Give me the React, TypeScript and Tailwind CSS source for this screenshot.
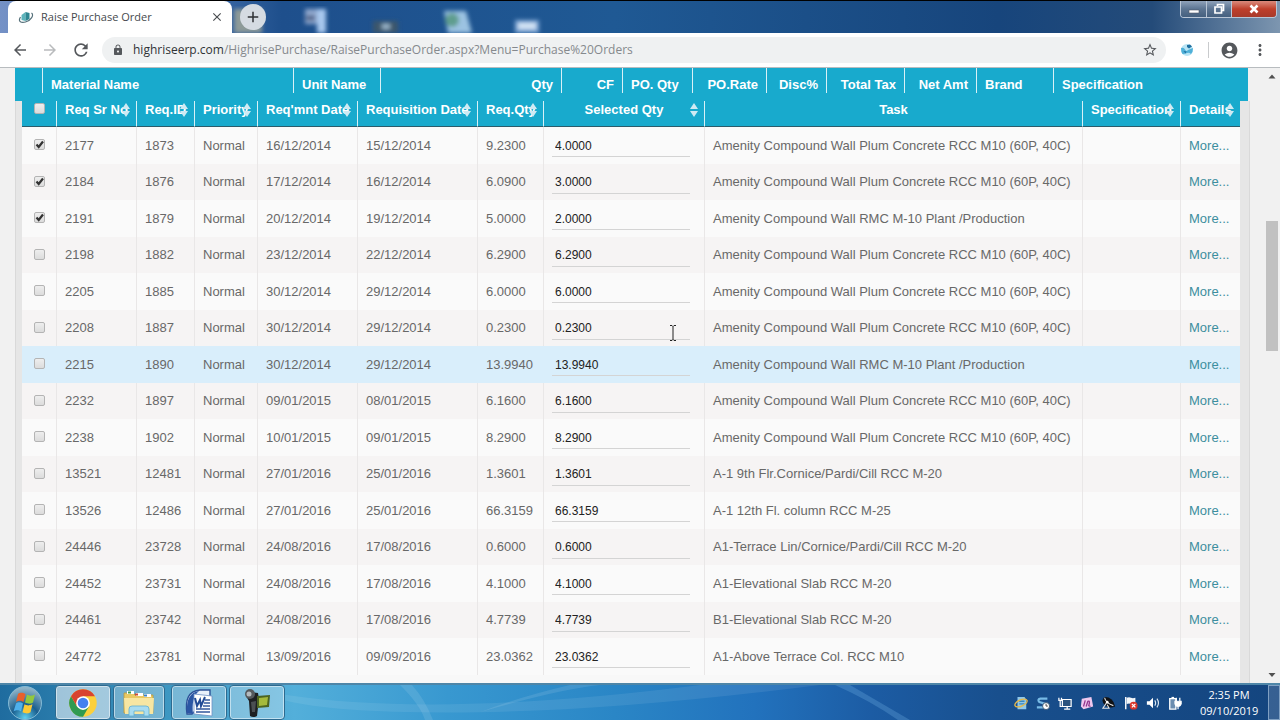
import React from 'react';
import { MdArrowBack, MdArrowForward, MdRefresh, MdLock, MdStarBorder, MdClose, MdAdd, MdMoreVert, MdAccountCircle } from 'react-icons/md';

interface RequisitionRow {
  srNo: string;
  reqId: string;
  requiredDate: string;
  requisitionDate: string;
  reqQty: string;
  selectedQty: string;
  task: string;
  checked?: boolean;
  active?: boolean;
}

const PLUM = 'Amenity Compound Wall Plum Concrete RCC M10 (60P, 40C)';
const RMC = 'Amenity Compound Wall RMC M-10 Plant /Production';

const rows: RequisitionRow[] = [
  { srNo: '2177', reqId: '1873', requiredDate: '16/12/2014', requisitionDate: '15/12/2014', reqQty: '9.2300', selectedQty: '4.0000', task: PLUM, checked: true },
  { srNo: '2184', reqId: '1876', requiredDate: '17/12/2014', requisitionDate: '16/12/2014', reqQty: '6.0900', selectedQty: '3.0000', task: PLUM, checked: true },
  { srNo: '2191', reqId: '1879', requiredDate: '20/12/2014', requisitionDate: '19/12/2014', reqQty: '5.0000', selectedQty: '2.0000', task: RMC, checked: true },
  { srNo: '2198', reqId: '1882', requiredDate: '23/12/2014', requisitionDate: '22/12/2014', reqQty: '6.2900', selectedQty: '6.2900', task: PLUM },
  { srNo: '2205', reqId: '1885', requiredDate: '30/12/2014', requisitionDate: '29/12/2014', reqQty: '6.0000', selectedQty: '6.0000', task: PLUM },
  { srNo: '2208', reqId: '1887', requiredDate: '30/12/2014', requisitionDate: '29/12/2014', reqQty: '0.2300', selectedQty: '0.2300', task: PLUM },
  { srNo: '2215', reqId: '1890', requiredDate: '30/12/2014', requisitionDate: '29/12/2014', reqQty: '13.9940', selectedQty: '13.9940', task: RMC, active: true },
  { srNo: '2232', reqId: '1897', requiredDate: '09/01/2015', requisitionDate: '08/01/2015', reqQty: '6.1600', selectedQty: '6.1600', task: PLUM },
  { srNo: '2238', reqId: '1902', requiredDate: '10/01/2015', requisitionDate: '09/01/2015', reqQty: '8.2900', selectedQty: '8.2900', task: PLUM },
  { srNo: '13521', reqId: '12481', requiredDate: '27/01/2016', requisitionDate: '25/01/2016', reqQty: '1.3601', selectedQty: '1.3601', task: 'A-1 9th Flr.Cornice/Pardi/Cill RCC M-20' },
  { srNo: '13526', reqId: '12486', requiredDate: '27/01/2016', requisitionDate: '25/01/2016', reqQty: '66.3159', selectedQty: '66.3159', task: 'A-1 12th Fl. column RCC M-25' },
  { srNo: '24446', reqId: '23728', requiredDate: '24/08/2016', requisitionDate: '17/08/2016', reqQty: '0.6000', selectedQty: '0.6000', task: 'A1-Terrace Lin/Cornice/Pardi/Cill RCC M-20' },
  { srNo: '24452', reqId: '23731', requiredDate: '24/08/2016', requisitionDate: '17/08/2016', reqQty: '4.1000', selectedQty: '4.1000', task: 'A1-Elevational Slab RCC M-20' },
  { srNo: '24461', reqId: '23742', requiredDate: '24/08/2016', requisitionDate: '17/08/2016', reqQty: '4.7739', selectedQty: '4.7739', task: 'B1-Elevational Slab RCC M-20' },
  { srNo: '24772', reqId: '23781', requiredDate: '13/09/2016', requisitionDate: '09/09/2016', reqQty: '23.0362', selectedQty: '23.0362', task: 'A1-Above Terrace Col. RCC M10' },
];

const materialColumns = [
  { label: 'Material Name', style: 'w-[251px] text-left' },
  { label: 'Unit Name', style: 'w-[87px] text-left' },
  { label: 'Qty', style: 'w-[181px] text-right' },
  { label: 'CF', style: 'w-[61px] text-right' },
  { label: 'PO. Qty', style: 'w-[70px] text-left' },
  { label: 'PO.Rate', style: 'w-[74px] text-right' },
  { label: 'Disc%', style: 'w-[60px] text-right' },
  { label: 'Total Tax', style: 'w-[78px] text-right' },
  { label: 'Net Amt', style: 'w-[72px] text-right' },
  { label: 'Brand', style: 'w-[77px] text-left' },
  { label: 'Specification', style: 'border-r-0 text-left' },
];

const requisitionColumns = [
  { label: 'Req Sr No', style: 'w-[80px] text-left', sortable: true },
  { label: 'Req.ID', style: 'w-[58px] text-left', sortable: true },
  { label: 'Priority', style: 'w-[63px] text-left', sortable: true },
  { label: "Req'mnt Date", style: 'w-[100px] text-left', sortable: true },
  { label: 'Requisition Date', style: 'w-[120px] text-left', sortable: true },
  { label: 'Req.Qty', style: 'w-[66px] text-left', sortable: true },
  { label: 'Selected Qty', style: 'w-[161px] text-center', sortable: true },
  { label: 'Task', style: 'text-center', sortable: false },
  { label: 'Specification', style: 'w-[98px] text-left', sortable: true },
  { label: 'Details', style: 'w-[59px] border-r-0 text-left', sortable: true },
];

const SiteIcon = () => (
  <svg viewBox="0 0 16 16" className="h-4 w-4 shrink-0">
    <path d="M3.500 6l4-3v9l-4-1z" fill="#5db4bb" />
    <path d="M7.500 3l4 1v6l-4 2z" fill="#2f8792" />
    <path d="M2.500 8c-3 5 1 6 5 5 5-1 9-7 6-9" fill="none" stroke="#55707a" strokeWidth="1.200" />
  </svg>
);

const GlobeIcon = () => (
  <svg viewBox="0 0 14 14" className="h-[14px] w-[14px]">
    <circle cx="7" cy="7" r="6" fill="#b9e4f4" />
    <path d="M1 5q3-1 4 1.500t3 .5l5-2q0 4-2 6-2-2-4-1T2.500 11Q1 9 1 5z" fill="#4fb0d8" />
    <path d="M7 2l3-.5 2 2-3 2-2-1.500zM3.500 8l3 .5-1 2z" fill="#1f6fa0" />
  </svg>
);

const SortIcon = () => (
  <svg viewBox="0 0 8 14" className="absolute right-[6px] top-[2px] h-[14px] w-2">
    <path d="M4 0l4 6H0zM4 14l4-6H0z" fill="#cfeaf3" />
  </svg>
);

const Checkbox: React.FC<{ label: string; checked?: boolean }> = ({ label, checked }) => (
  <span className="relative mx-auto block h-[11px] w-[11px]">
    <input
      type="checkbox"
      aria-label={label}
      defaultChecked={checked}
      className="peer block h-[11px] w-[11px] appearance-none rounded-[2px] border border-[#b4b4b4] bg-linear-to-b from-[#eeeeee] to-[#dcdcdc]"
    />
    <svg viewBox="0 0 11 11" className="pointer-events-none absolute inset-0 hidden h-[11px] w-[11px] peer-checked:block">
      <path d="M2.500 5.500l2.200 2.500L9 2.500" fill="none" stroke="#333" strokeWidth="2.200" />
    </svg>
  </span>
);

const TitleBar = () => (
  <header className="relative flex h-[33px] shrink-0 items-start justify-between border-t border-black bg-[#1f5793]">
    <svg viewBox="0 0 1280 32" preserveAspectRatio="none" className="absolute inset-0 h-full w-full">
      <defs>
        <linearGradient id="glass">
          <stop offset="0" stopColor="#7491c6" />
          <stop offset="0.170" stopColor="#3a67a4" />
          <stop offset="0.220" stopColor="#1e4f8c" />
          <stop offset="0.480" stopColor="#1f5994" />
          <stop offset="0.780" stopColor="#17457c" />
          <stop offset="0.900" stopColor="#244b79" />
          <stop offset="1" stopColor="#7d96b0" />
        </linearGradient>
        <filter id="soft"><feGaussianBlur stdDeviation="2" /></filter>
      </defs>
      <rect width="1280" height="32" fill="url(#glass)" />
      <g filter="url(#soft)">
        <rect x="234" y="8" width="28" height="24" fill="#8d9a98" />
        <rect x="305" y="8" width="12" height="15" fill="#8ea6cc" />
        <rect x="317" y="8" width="9" height="24" fill="#a9c8ee" />
        <rect x="306" y="15" width="9" height="4" fill="#3c4f78" />
        <rect x="373" y="20" width="25" height="12" fill="#3c566c" />
        <rect x="382" y="23" width="8" height="5" fill="#9ab6cc" />
        <path d="M444 10h22l6 22h-24z" fill="#9cc3e2" />
        <circle cx="452" cy="19" r="7" fill="#5f9d8e" />
        <rect x="515" y="19" width="24" height="13" fill="#7ea6d4" />
        <rect x="518" y="22" width="18" height="6" fill="#d6e6f6" />
      </g>
    </svg>
    <div className="relative flex h-8 items-center">
      <div className="ml-2 flex h-8 w-[224px] items-center rounded-t-lg bg-white pl-[10px] pr-2">
        <SiteIcon />
        <span className="ml-[7px] grow font-['Open_Sans',sans-serif] text-[11px] text-[#45494d]">Raise Purchase Order</span>
        <button aria-label="Close tab"><MdClose className="block h-[14px] w-[14px] text-[#4a4d51]" /></button>
      </div>
      <button aria-label="New tab" className="ml-2 flex h-[26px] w-[26px] items-center justify-center rounded-full bg-[#d5dbe2]">
        <MdAdd className="h-[18px] w-[18px] text-[#2e3134]" />
      </button>
    </div>
    <div className="relative mr-[3px] flex h-[17px] overflow-hidden rounded-b border border-t-0 border-[#b9c6d6]">
      <button aria-label="Minimize" className="flex w-[26px] items-center justify-center border-r border-[#b9c6d6] bg-linear-to-b from-[#8fa2ba] via-[#5c7592] to-[#45607f]">
        <svg viewBox="0 0 12 12" className="h-3 w-3"><path d="M1 7h10v3H1z" fill="#fff" stroke="#50596a" strokeWidth="0.600" /></svg>
      </button>
      <button aria-label="Restore" className="flex w-[25px] items-center justify-center border-r border-[#b9c6d6] bg-linear-to-b from-[#8fa2ba] via-[#5c7592] to-[#45607f]">
        <svg viewBox="0 0 12 12" className="h-3 w-3"><path d="M4.500 3V1.500h6v6H9M2 4h6.500v6H2z" fill="none" stroke="#fff" strokeWidth="1.700" /></svg>
      </button>
      <button aria-label="Close" className="flex w-[44px] items-center justify-center bg-linear-to-b from-[#d98a7c] via-[#bf3f2b] to-[#a83a2a]">
        <svg viewBox="0 0 12 12" className="h-3 w-3"><path d="M2.500 2.500l7 7M9.500 2.500l-7 7" stroke="#fff" strokeWidth="2.600" /></svg>
      </button>
    </div>
  </header>
);

const Toolbar = () => (
  <nav className="flex h-[35px] shrink-0 items-center border-b border-[#b8bcbf] bg-white px-[11px] text-[#55585c]">
    <button aria-label="Back"><MdArrowBack className="block h-[18px] w-[18px]" /></button>
    <button aria-label="Forward" className="ml-3"><MdArrowForward className="block h-[18px] w-[18px] text-[#b9bbbd]" /></button>
    <button aria-label="Reload" className="ml-3"><MdRefresh className="block h-5 w-5" /></button>
    <div className="ml-[11px] flex h-[26px] grow items-center rounded-full bg-[#eff1f2] pl-[10px] pr-2">
      <MdLock className="h-3 w-3 shrink-0" />
      <p className="ml-[9px] grow font-['Open_Sans',sans-serif] text-[12px] text-[#85898d]">
        <span className="text-[#303336]">highriseerp.com</span>/HighrisePurchase/RaisePurchaseOrder.aspx?Menu=Purchase%20Orders
      </p>
      <button aria-label="Bookmark this page"><MdStarBorder className="block h-4 w-4" /></button>
    </div>
    <button aria-label="Extension" className="ml-[14px]"><GlobeIcon /></button>
    <span className="ml-[14px] h-4 w-px bg-[#c9cbcd]" />
    <button aria-label="Profile" className="ml-[11px]"><MdAccountCircle className="block h-[19px] w-[19px]" /></button>
    <button aria-label="Menu" className="ml-3"><MdMoreVert className="block h-[18px] w-[18px]" /></button>
  </nav>
);

const MaterialHeader = () => (
  <div className="bg-[#18aacd] pb-2">
    <table className="w-full table-fixed border-separate border-spacing-0 text-[13px] leading-4 text-white">
      <thead>
        <tr>
          <td className="h-[25px] w-[28px] border-r border-[#d9f1f7] p-0" />
          {materialColumns.map(col => (
            <th key={col.label} className={`h-[25px] whitespace-nowrap border-r border-[#d9f1f7] px-2 pb-0 pt-[9px] font-bold ${col.style}`}>
              {col.label}
            </th>
          ))}
        </tr>
      </thead>
    </table>
  </div>
);

const cell = 'border-r border-[#e9e7e7] px-2 py-0 group-data-active:border-transparent whitespace-nowrap';

const RequisitionTable = () => (
  <table className="w-full table-fixed border-separate border-spacing-0 bg-[#fafafa] text-[13px] text-[#686868]">
    <thead>
      <tr className="bg-[#18aacd] leading-[18px] text-white">
        <th className="h-[26px] w-[35px] border-b border-r border-b-[#2b5c6b] border-r-[#d9f1f7] px-0 pb-0 pt-[2px] align-top">
          <Checkbox label="Select all requisitions" />
        </th>
        {requisitionColumns.map(col => (
          <th key={col.label} className={`relative h-[26px] whitespace-nowrap border-b border-r border-b-[#2b5c6b] border-r-[#d9f1f7] px-2 py-0 align-top font-bold ${col.style}`}>
            {col.label}
            {col.sortable && <SortIcon />}
          </th>
        ))}
      </tr>
    </thead>
    <tbody>
      {rows.map(row => (
        <tr
          key={row.srNo}
          data-active={row.active || undefined}
          className="group h-[37px] bg-[#fafafa] even:h-9 even:bg-[#f6f4f4] data-active:bg-[#d9eefb]"
        >
          <td className="border-r border-[#e9e7e7] px-0 pb-[2px] pt-0 group-data-active:border-transparent">
            <Checkbox label={`Select requisition ${row.srNo}`} checked={row.checked} />
          </td>
          <td className={cell}>{row.srNo}</td>
          <td className={cell}>{row.reqId}</td>
          <td className={cell}>Normal</td>
          <td className={cell}>{row.requiredDate}</td>
          <td className={cell}>{row.requisitionDate}</td>
          <td className={cell}>{row.reqQty}</td>
          <td className={cell}>
            <input
              type="text"
              aria-label={`Selected quantity for ${row.srNo}`}
              defaultValue={row.selectedQty}
              className="block h-[23px] w-[138px] border-b border-[#d4d4d4] bg-transparent pl-[3px] pt-px text-[12px] text-[#222] outline-none"
            />
          </td>
          <td className={cell}>{row.task}</td>
          <td className={cell} />
          <td className="px-2 py-0"><a href="#" className="text-[#3d8e9e]">More...</a></td>
        </tr>
      ))}
    </tbody>
  </table>
);

const PageScrollbar = () => (
  <div className="flex w-4 shrink-0 flex-col items-center bg-[#f1f1f1]">
    <svg viewBox="0 0 16 16" className="h-4 w-4 shrink-0"><path d="M4.500 10.500h7L8 6.500z" fill="#505050" /></svg>
    <div className="mt-[137px] h-[130px] w-3 shrink-0 bg-[#c1c1c1]" />
    <svg viewBox="0 0 16 16" className="mt-auto h-4 w-4 shrink-0"><path d="M4.500 6h7L8 10z" fill="#505050" /></svg>
  </div>
);

const StartOrb = () => (
  <svg viewBox="0 0 36 36" className="h-[36px] w-[36px]">
    <defs>
      <radialGradient id="orb" cx="0.500" cy="0.950" r="0.900">
        <stop offset="0" stopColor="#5fd0f0" />
        <stop offset="0.450" stopColor="#1b5f8f" />
        <stop offset="1" stopColor="#8fb4c8" />
      </radialGradient>
    </defs>
    <circle cx="18" cy="18" r="16.500" fill="url(#orb)" stroke="#83bad6" strokeWidth="1" />
    <path d="M11 9c3-2 5-1 7.500 0l-2 8c-2-1-4-2-7.500 0z" fill="#e8602c" />
    <path d="M20 9.500c2 1 4 2 8 0l-2 8c-3 2-5 1-8 0z" fill="#93c83e" />
    <path d="M9 18.500c3-2 5-1 7 0l-2 8c-2-1-4-2-7.500 0z" fill="#4fb0ec" />
    <path d="M17.500 19.300c2 1 4 2 8 0l-2 8c-3 2-5 1-8 0z" fill="#fcc934" />
  </svg>
);

const ChromeIcon = () => (
  <svg viewBox="0 0 48 48" className="h-[30px] w-[30px]">
    <circle cx="24" cy="24" r="22" fill="#fbd03c" />
    <path d="M24 24L4.900 13A22 22 0 0 1 43.100 13H24z" fill="#d8432f" />
    <path d="M4.900 13A22 22 0 0 0 24 46l9.500-16.500L24 24 14.500 29.500z" fill="#2f9a51" />
    <path d="M4.900 13L14.500 29.500 24 24V13z" fill="#d8432f" />
    <circle cx="24" cy="24" r="11" fill="#fff" />
    <circle cx="24" cy="24" r="8.500" fill="#4480ef" />
  </svg>
);

const ExplorerIcon = () => (
  <svg viewBox="0 0 32 28" className="h-7 w-8">
    <path d="M1 4h9l2 2h18v18H1z" fill="#e9c964" stroke="#b99a3e" strokeWidth="0.800" />
    <path d="M4 2h7v3H4zM13 4h7v3h-7zM21 5h7v3h-7z" fill="#fff" />
    <path d="M5 2.500h3v2H5z" fill="#3a9a4a" />
    <path d="M12 4.500h3v2h-3z" fill="#cc4b38" />
    <path d="M21 5.500h3v2h-3z" fill="#3b83c8" />
    <path d="M1 9h30l-1 16H2z" fill="#f7e6a2" />
    <path d="M6 27v-7q0-3 3-3h14q3 0 3 3v7h-5v-5H11v5z" fill="#a8dcf0" stroke="#5fafd2" strokeWidth="0.800" />
  </svg>
);

const WordIcon = () => (
  <svg viewBox="0 0 30 30" className="h-[30px] w-[30px]">
    <path d="M3 26C1 12 4 3 16 2h10v6L8 26z" fill="#e8f0fb" stroke="#2c5298" strokeWidth="1.400" />
    <path d="M3 25C2 12 6 4 15 3 9 8 8 16 9 26z" fill="#2b56a4" />
    <path d="M10 6l18 2v20l-18-2z" fill="#fff" stroke="#6f8fc4" strokeWidth="0.800" />
    <path d="M11 10l2 8 3-6 1 6 4-9" fill="none" stroke="#234b96" strokeWidth="2" />
    <path d="M21 12h5M20 15h6M19 18h7M12 21h14M12 24h14" stroke="#35589c" strokeWidth="1.400" />
  </svg>
);

const CamcorderIcon = () => (
  <svg viewBox="0 0 28 30" className="h-[30px] w-7">
    <path d="M3 8l4-4 8 1 1 6-2 17q-4 2-7 0L6 13z" fill="#1e2022" />
    <circle cx="7" cy="6" r="5" fill="#55595c" />
    <circle cx="6" cy="6" r="2.500" fill="#b5babd" />
    <path d="M8 14l5-1-1 11H9z" fill="#4b4f52" />
    <path d="M14 8l13-1-1 12-12 1z" fill="#4c6421" />
    <path d="M16 10l9-1-1 8-8 1z" fill="#a5ba3c" />
  </svg>
);

const apps = [
  { name: 'Google Chrome', icon: <ChromeIcon />, style: 'w-[56px] bg-white/55' },
  { name: 'File Explorer', icon: <ExplorerIcon />, style: 'ml-[2px] w-[52px] bg-white/30' },
  { name: 'Microsoft Word', icon: <WordIcon />, style: 'ml-[6px] w-[56px] bg-white/30' },
  { name: 'Camcorder', icon: <CamcorderIcon />, style: 'ml-[2px] w-[56px] bg-white/30' },
];

const trayIcons = [
  {
    name: 'Internet Explorer',
    art: (
      <>
        <path d="M4 1h8l2 3v11H4z" fill="#8fc8ea" />
        <path d="M6 6h6M6 9h6" stroke="#3c87bd" strokeWidth="1.500" />
        <ellipse cx="8" cy="8" rx="7.500" ry="3.500" transform="rotate(-25 8 8)" fill="none" stroke="#e4b84a" strokeWidth="1.600" />
      </>
    ),
  },
  {
    name: 'Sync',
    art: (
      <>
        <path d="M13 3H5Q1 4 4 7l7 2q2 3-2 4H1" fill="none" stroke="#78bbe6" strokeWidth="2.500" />
        <circle cx="11.500" cy="11.500" r="4" fill="#fff" stroke="#34516d" />
        <path d="M11.500 9v2.500h2" fill="none" stroke="#333" />
      </>
    ),
  },
  {
    name: 'Network',
    art: (
      <>
        <path d="M5 4h10v8H5z" fill="#29527e" stroke="#fff" strokeWidth="1.400" />
        <path d="M7 15h7M10.500 12v3M1 2v3h3V2M2.500 5v7h2" fill="none" stroke="#fff" strokeWidth="1.400" />
      </>
    ),
  },
  {
    name: 'Input panel',
    art: (
      <>
        <path d="M2 3l11-2 2 11-11 3-3-3z" fill="#efc8ee" />
        <path d="M4 12l2-7M7 12l2-6q3-1 1 5l2 1" fill="none" stroke="#92388f" strokeWidth="1.500" />
      </>
    ),
  },
  {
    name: 'Satellite',
    art: (
      <>
        <path d="M3 1q10 0 12 11-7 3-12-2t0-9z" fill="#101215" />
        <path d="M3 2q1 6 10 9M5 8l-4 6h7l-2-4" fill="none" stroke="#e3e3e3" strokeWidth="1.300" />
        <circle cx="6" cy="7" r="1.500" fill="#fff" />
      </>
    ),
  },
  {
    name: 'Action Center',
    art: (
      <>
        <path d="M2 1v14" stroke="#fff" strokeWidth="1.600" />
        <path d="M3 2q3-1 5 0t5 0v7q-3 1-5 0t-5 0z" fill="#f3f6f9" />
        <circle cx="11" cy="11" r="4.500" fill="#d9362b" />
        <path d="M9 9l4 4M13 9l-4 4" stroke="#fff" strokeWidth="1.500" />
      </>
    ),
  },
  {
    name: 'Volume',
    art: (
      <>
        <path d="M1 6h3l4-4v12L4 10H1z" fill="#fff" />
        <path d="M10 5q2 3 0 6M12.500 3q3.500 5 0 10" fill="none" stroke="#dce8f2" strokeWidth="1.300" />
      </>
    ),
  },
  {
    name: 'Power',
    art: (
      <>
        <path d="M2 3h7v12H2z" fill="#6b8db0" stroke="#fff" strokeWidth="1.500" />
        <path d="M4 1h3v2H4z" fill="#fff" />
        <path d="M8 6h7v3q-1 3-3.500 3T8 9zM9.500 2v4M13.500 2v4M11.500 12v3" fill="#fff" stroke="#fff" strokeWidth="1.400" />
      </>
    ),
  },
];

const Taskbar = () => (
  <footer className="relative flex h-[37px] shrink-0 overflow-hidden border-t-2 border-[#4e86a8]">
    <svg viewBox="0 0 1280 36" preserveAspectRatio="none" className="absolute inset-0 h-full w-full">
      <defs>
        <linearGradient id="bar">
          <stop offset="0" stopColor="#1f6c9f" />
          <stop offset="0.120" stopColor="#3a94bf" />
          <stop offset="0.230" stopColor="#53afda" />
          <stop offset="0.350" stopColor="#3898d0" />
          <stop offset="0.480" stopColor="#2a86c6" />
          <stop offset="0.590" stopColor="#2272bd" />
          <stop offset="0.680" stopColor="#1c5ca4" />
          <stop offset="0.780" stopColor="#184f8d" />
          <stop offset="1" stopColor="#14457f" />
        </linearGradient>
      </defs>
      <rect width="1280" height="36" fill="url(#bar)" />
      <path d="M285 10Q440 34 700 0h120Q620 26 480 28T285 16z" fill="#fff" opacity="0.080" />
      <path d="M480 28Q560 4 600 0h-30Q520 12 480 28zM400 0q20 20 25 36h8Q425 15 412 0z" fill="#fff" opacity="0.100" />
      <path d="M850 0q40 24 60 36h-12Q870 16 835 0z" fill="#7fc0f0" opacity="0.250" />
    </svg>
    <button aria-label="Start" className="relative ml-[7px] mr-3 shrink-0"><StartOrb /></button>
    {apps.map(app => (
      <button key={app.name} aria-label={app.name} className={`relative flex h-full shrink-0 items-center justify-center rounded-sm border border-[#2c6a90] shadow-[inset_0_0_0_1px_rgba(255,255,255,0.5)] ${app.style}`}>
        {app.icon}
      </button>
    ))}
    <div className="relative ml-auto flex shrink-0 items-center gap-2">
      {trayIcons.map(icon => (
        <button key={icon.name} aria-label={icon.name}>
          <svg viewBox="0 0 16 16" className="block h-[14px] w-[14px]">{icon.art}</svg>
        </button>
      ))}
    </div>
    <div className="relative ml-[18px] flex w-[58px] shrink-0 flex-col justify-center text-center font-['Open_Sans',sans-serif] text-[11px] leading-4 text-white">
      <span>2:35 PM</span>
      <span>09/10/2019</span>
    </div>
    <button aria-label="Show desktop" className="relative ml-[10px] w-3 shrink-0 border border-[#7f9fc2] bg-white/15" />
  </footer>
);

const App: React.FC = () => {
  return (
    <div className="flex h-screen flex-col overflow-hidden bg-[#f1f1f1] font-['Liberation_Sans',Arial,sans-serif]">
      <TitleBar />
      <Toolbar />
      <div className="relative flex min-h-0 grow">
        <main className="min-w-0 grow overflow-hidden pl-[15px] pr-4">
          <MaterialHeader />
          <div className="-mr-[2px] border-x border-[#d9d9d9] bg-[#e6e6e6] pl-[6px] pr-[9px]">
            <RequisitionTable />
            <div className="h-9 bg-[#f8f8f8]" />
          </div>
        </main>
        <PageScrollbar />
        {/* text cursor hovering over the quantity column */}
        <svg viewBox="0 0 8 16" className="pointer-events-none absolute left-[669px] top-[257px] h-4 w-2">
          <path d="M1 .5h2l1 1 1-1h2M4 1.500v13M1 15.500h2l1-1 1 1h2" fill="none" stroke="#222" />
        </svg>
      </div>
      <Taskbar />
    </div>
  );
};

export default App;
